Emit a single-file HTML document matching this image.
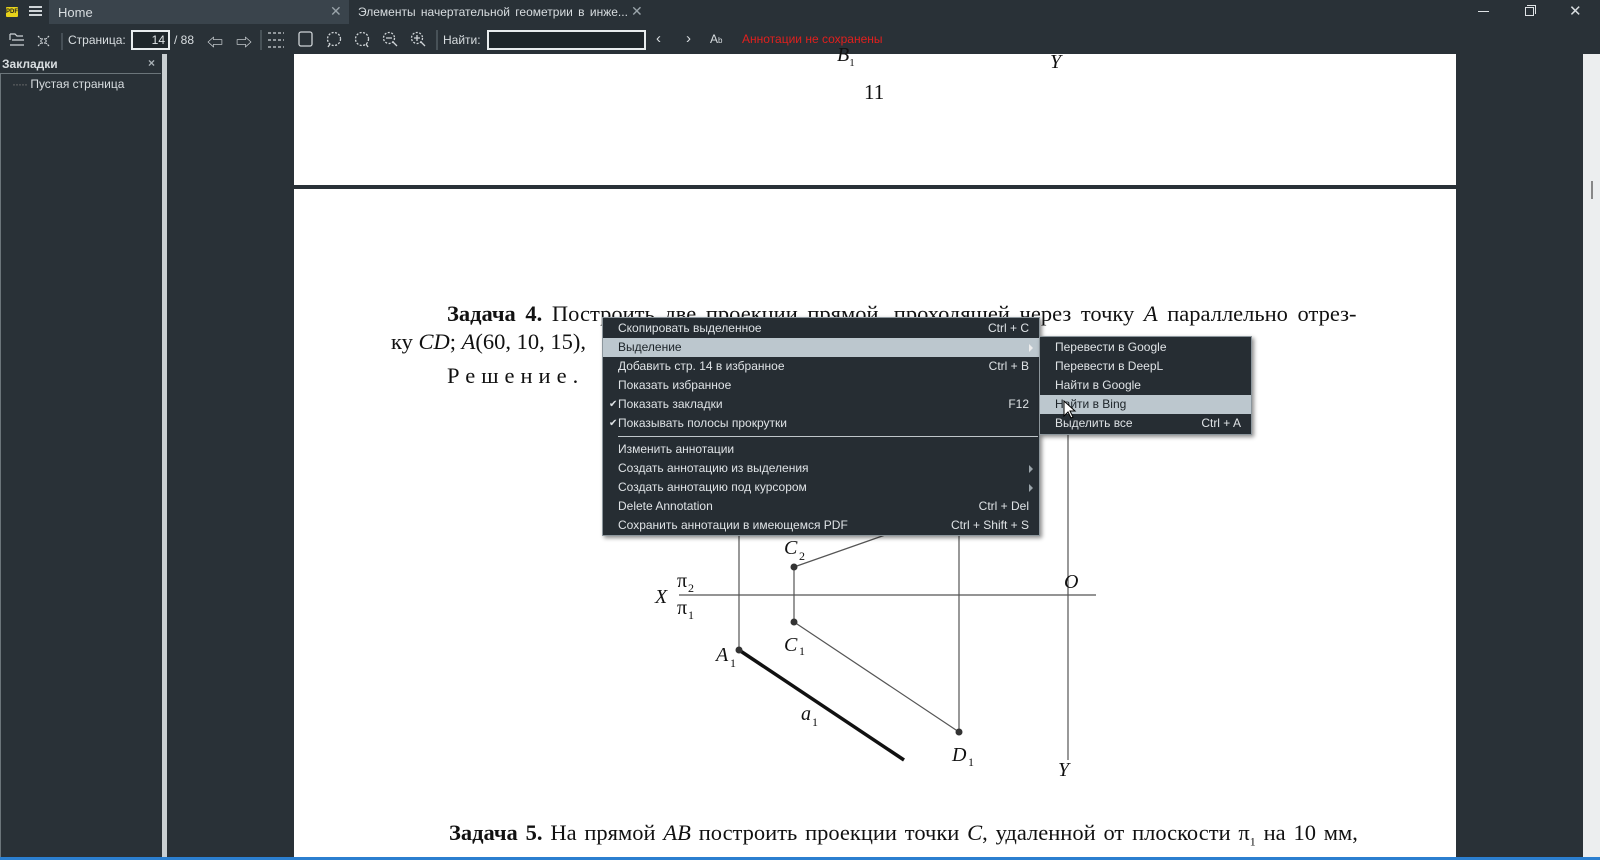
<!DOCTYPE html>
<html><head><meta charset="utf-8">
<style>
*{margin:0;padding:0;box-sizing:border-box}
body{width:1600px;height:860px;overflow:hidden;background:#293137;font-family:"Liberation Sans","Noto Sans CJK SC",sans-serif;position:relative;color:#dfe3e6}
.a{position:absolute;white-space:nowrap}
.ui{font-size:12px;color:#d8dde0}
.serif{font-family:"Liberation Serif","Noto Serif CJK SC",serif;color:#111}
.menu{position:absolute;background:#262d33;border:1px solid #8c969c;box-shadow:2px 2px 4px rgba(0,0,0,.45);font-size:12px;color:#dfe3e6}
.mi{position:absolute;left:0;right:0;height:19px;line-height:19px;padding-left:15px}
.mi .k{position:absolute;right:10px;top:0}
.hl{background:#bcc7ce;color:#1c2328}
.chk{position:absolute;left:6px;font-size:10px}
.arr{position:absolute;right:6px;top:6px;width:0;height:0;border-left:4px solid #9aa4aa;border-top:4px solid transparent;border-bottom:4px solid transparent}
</style></head><body>
<div class="a" style="left:0;top:0;width:1600px;height:26px;background:#293137"></div>
<div class="a" style="left:6px;top:7px;width:12px;height:10px;background:#e8d31a;border-radius:1px;font-size:6px;color:#222;font-weight:bold;line-height:10px;text-align:center">PDF</div>
<div class="a" style="left:29px;top:6px;width:13px;height:2px;background:#cfd4d7;box-shadow:0 4px 0 #cfd4d7,0 8px 0 #cfd4d7"></div>
<div class="a" style="left:49px;top:0;width:300px;height:24px;background:#3a444c"></div>
<div class="a ui" style="left:58px;top:5px;font-size:13px">Home</div>
<div class="a ui" style="left:330px;top:3px;font-size:14px;color:#9aa4aa">✕</div>
<div class="a ui" style="left:358px;top:5px;font-size:12px;word-spacing:2px">Элементы начертательной геометрии в инже...</div>
<div class="a ui" style="left:631px;top:3px;font-size:14px;color:#9aa4aa">✕</div>
<div class="a" style="left:1478px;top:11px;width:11px;height:1px;background:#dfe3e6"></div>
<div class="a" style="left:1525px;top:7px;width:9px;height:9px;border:1px solid #dfe3e6"></div>
<div class="a" style="left:1527px;top:5px;width:9px;height:9px;border-top:1px solid #dfe3e6;border-right:1px solid #dfe3e6"></div>
<div class="a ui" style="left:1569px;top:2px;font-size:15px">✕</div>
<svg class="a" style="left:8px;top:30px" width="150" height="20" fill="none" stroke="#cfd4d7" stroke-width="1.2">
<path d="M2 4h5l2 2h6M2 4v6M2 15h14M4 10h12"/>
<path d="M30 6l3 3m8-3l-3 3M30 16l3-3m8 3l-3-3M33 9h5v4h-5z" stroke-dasharray="2 1"/>
<path d="M54 3v17" stroke="#5a646a"/>
</svg>
<div class="a ui" style="left:68px;top:33px">Страница:</div>
<div class="a" style="left:131px;top:30px;width:39px;height:20px;border:2px solid #e8ecee;background:#1f262b;color:#dfe3e6;font-size:12px;text-align:right;padding-right:3px;line-height:16px">14</div>
<div class="a ui" style="left:174px;top:33px">/ 88</div>
<div class="a ui" style="left:207px;top:29px;font-size:16px">⇦</div>
<div class="a ui" style="left:236px;top:29px;font-size:16px">⇨</div>
<svg class="a" style="left:260px;top:28px" width="180" height="24" fill="none" stroke="#cfd4d7" stroke-width="1.3">
<path d="M1 2v20" stroke="#5a646a"/>
<path d="M8 5h16M8 19h16M8 12h16" stroke-dasharray="3 2"/>
<rect x="39" y="4" width="13" height="14" rx="2"/>
<circle cx="74" cy="11" r="6.5" stroke-dasharray="2 1.5"/><path d="M70 16l-2 3"/>
<circle cx="102" cy="11" r="6.5" stroke-dasharray="2 1.5"/><path d="M106 16l2 3"/>
<circle cx="129" cy="10" r="5.5" stroke-dasharray="2 1.5"/><path d="M133 14l4 4M126 10h6"/>
<circle cx="157" cy="10" r="5.5" stroke-dasharray="2 1.5"/><path d="M161 14l4 4M154 10h6M157 7v6"/>
<path d="M177 2v20" stroke="#5a646a"/>
</svg>
<div class="a ui" style="left:443px;top:33px">Найти:</div>
<div class="a" style="left:487px;top:30px;width:159px;height:20px;border:2px solid #e8ecee;background:#1f262b"></div>
<div class="a ui" style="left:656px;top:30px;font-size:15px">‹</div>
<div class="a ui" style="left:686px;top:30px;font-size:15px">›</div>
<div class="a ui" style="left:710px;top:32px;font-size:12px">A<span style="font-size:8px">b</span></div>
<div class="a" style="left:742px;top:32px;font-size:12px;color:#e0201e">Аннотации не сохранены</div>
<div class="a" style="left:0;top:54px;width:162px;height:806px;background:#293137"></div>
<div class="a" style="left:162px;top:54px;width:5px;height:806px;background:#c9cfd2"></div>
<div class="a ui" style="left:2px;top:57px;font-weight:bold">Закладки</div>
<div class="a ui" style="left:148px;top:56px;font-weight:bold;color:#aab2b7">×</div>
<div class="a" style="left:0;top:73px;width:161px;height:787px;border:1px solid #6b757a;border-right:none"></div>
<div class="a ui" style="left:12px;top:77px"><span style="color:#777;letter-spacing:-1px">·····</span> Пустая страница</div>
<div class="a" style="left:1583px;top:54px;width:17px;height:806px;background:#eceeef"></div>
<div class="a" style="left:1591px;top:181px;width:2px;height:18px;background:#888"></div>
<div class="a" style="left:0;top:857px;width:1600px;height:3px;background:#2b7fd0"></div>
<div class="a" style="left:294px;top:54px;width:1162px;height:131px;background:#fff"></div>
<div class="a" style="left:294px;top:189px;width:1162px;height:668px;background:#fff"></div>
<div class="a serif" style="left:837px;top:44px;font-size:20px;font-style:italic">B<sub style="font-size:11px;font-style:normal">1</sub></div>
<div class="a serif" style="left:1050px;top:51px;font-size:20px;font-style:italic">Y</div>
<div class="a serif" style="left:864px;top:80px;font-size:21px">11</div>
<div class="a serif" style="left:447px;top:301px;font-size:22.5px;word-spacing:4px"><b>Задача 4.</b> Построить две проекции прямой, проходящей через точку <i>A</i> параллельно отрез-</div>
<div class="a serif" style="left:391px;top:329px;font-size:22.5px">ку <i>CD</i>; <i>A</i>(60, 10, 15),</div>
<div class="a serif" style="left:447px;top:363px;font-size:22.5px;letter-spacing:6px">Решение.</div>
<div class="a serif" style="left:449px;top:820px;font-size:22.5px;word-spacing:2.2px"><b>Задача 5.</b> На прямой <i>AB</i> построить проекции точки <i>C</i>, удаленной от плоскости π<sub style="font-size:12px">1</sub> на 10 мм,</div>
<svg class="a" style="left:0;top:0" width="1600" height="860" fill="none">
<g stroke="#555" stroke-width="1.2">
<path d="M739 530V650M794 567V622M959 530V732M1068 430V760M679 595H1096"/>
<path d="M794 567L888 534M794 622L959 732"/>
</g>
<path d="M739 650L904 760" stroke="#111" stroke-width="3.5"/>
<g fill="#333"><circle cx="794" cy="567" r="3.5"/><circle cx="794" cy="622" r="3.5"/><circle cx="739" cy="650" r="3.5"/><circle cx="959" cy="732" r="3.5"/></g>
<g font-family="Liberation Serif" font-size="20" font-style="italic" fill="#111">
<text x="784" y="554">C</text><text x="784" y="651">C</text><text x="716" y="661">A</text><text x="801" y="720">a</text><text x="952" y="761">D</text><text x="1064" y="588">O</text><text x="1058" y="776">Y</text><text x="655" y="603">X</text>
</g>
<g font-family="Liberation Serif" font-size="12" fill="#111">
<text x="799" y="560">2</text><text x="799" y="655">1</text><text x="730" y="667">1</text><text x="812" y="726">1</text><text x="968" y="766">1</text><text x="688" y="592">2</text><text x="688" y="619">1</text>
</g>
<g font-family="Liberation Serif" font-size="20" fill="#111"><text x="677" y="587">π</text><text x="677" y="614">π</text></g>
</svg>
<div class="menu" style="left:602px;top:317px;width:438px;height:219px">
<div class="mi" style="top:1px">Скопировать выделенное<span class="k">Ctrl + C</span></div>
<div class="mi hl" style="top:20px">Выделение<span class="arr" style="border-left-color:#eee"></span></div>
<div class="mi" style="top:39px">Добавить стр. 14 в избранное<span class="k">Ctrl + B</span></div>
<div class="mi" style="top:58px">Показать избранное</div>
<div class="mi" style="top:77px"><span class="chk">✔</span>Показать закладки<span class="k">F12</span></div>
<div class="mi" style="top:96px"><span class="chk">✔</span>Показывать полосы прокрутки</div>
<div class="a" style="left:15px;top:118px;width:420px;height:1px;background:#bfc6ca"></div>
<div class="mi" style="top:122px">Изменить аннотации</div>
<div class="mi" style="top:141px">Создать аннотацию из выделения<span class="arr"></span></div>
<div class="mi" style="top:160px">Создать аннотацию под курсором<span class="arr"></span></div>
<div class="mi" style="top:179px">Delete Annotation<span class="k">Ctrl + Del</span></div>
<div class="mi" style="top:198px">Сохранить аннотации в имеющемся PDF<span class="k">Ctrl + Shift + S</span></div>
</div>
<div class="menu" style="left:1039px;top:336px;width:213px;height:99px">
<div class="mi" style="top:1px">Перевести в Google</div>
<div class="mi" style="top:20px">Перевести в DeepL</div>
<div class="mi" style="top:39px">Найти в Google</div>
<div class="mi hl" style="top:58px">Найти в Bing</div>
<div class="mi" style="top:77px">Выделить все<span class="k">Ctrl + A</span></div>
</div>
<svg class="a" style="left:1063px;top:400px" width="14" height="20"><path d="M1 1v15l4-4 3 6 2-1-3-6h5z" fill="#fff" stroke="#000"/></svg>
</body></html>
